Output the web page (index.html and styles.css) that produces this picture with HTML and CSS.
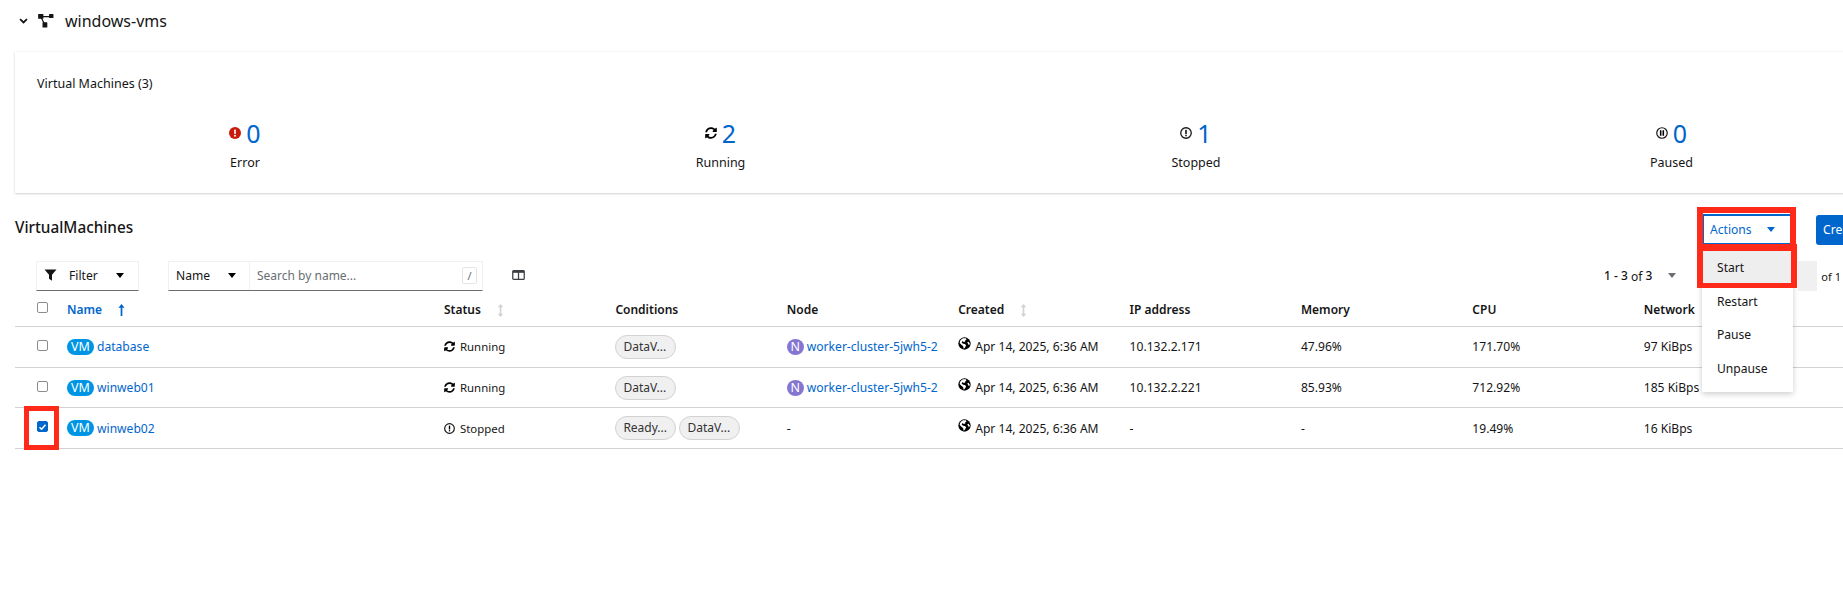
FILE: index.html
```html
<!DOCTYPE html>
<html lang="en">
<head>
  <meta charset="UTF-8">
  <title>VirtualMachines</title>
  <link rel="stylesheet" href="styles.css">
</head>
<body>
  <svg class="defs" width="0" height="0">
    <symbol id="i-sync" viewBox="0 0 512 512"><path d="M370.72 133.28C339.458 104.008 298.888 87.962 255.848 88c-77.458.068-144.328 53.178-162.791 126.85-1.344 5.363-6.122 9.15-11.651 9.15H24.103c-7.498 0-13.194-6.807-11.807-14.176C33.933 94.924 134.813 8 256 8c66.448 0 126.791 26.136 171.315 68.685L463.03 40.97C478.149 25.851 504 36.559 504 57.941V192c0 13.255-10.745 24-24 24H345.941c-21.382 0-32.09-25.851-16.971-40.971l41.75-41.749zM32 296h134.059c21.382 0 32.09 25.851 16.971 40.971l-41.75 41.75c31.262 29.273 71.835 45.319 114.876 45.28 77.418-.07 144.315-53.144 162.787-126.849 1.344-5.363 6.122-9.15 11.651-9.15h57.304c7.498 0 13.194 6.807 11.807 14.176C478.067 417.076 377.187 504 256 504c-66.448 0-126.791-26.136-171.315-68.685L48.97 471.03C33.851 486.149 8 475.441 8 454.059V320c0-13.255 10.745-24 24-24z"/></symbol>
    <symbol id="i-off" viewBox="0 0 16 16"><circle cx="8" cy="8" r="7" fill="none" stroke="currentColor" stroke-width="1.7"/><rect x="7" y="3.6" width="2" height="6" rx=".6"/><circle cx="8" cy="11.4" r="1.1"/></symbol>
    <symbol id="i-pause" viewBox="0 0 16 16"><circle cx="8" cy="8" r="7" fill="none" stroke="currentColor" stroke-width="1.6"/><rect x="5.2" y="4.4" width="2.1" height="7.2" rx=".4"/><rect x="8.7" y="4.4" width="2.1" height="7.2" rx=".4"/></symbol>
    <symbol id="i-globe" viewBox="0 0 16 16"><circle cx="8" cy="8" r="7.6"/><path fill="#fff" d="M6.2 1.6 9.8 1.5 10.4 3 8.8 4.4 9 5.6 7 6.2 5.6 5 4.4 6.8 6.2 8.4 8.4 8.6 10 10 9 12.4 7.6 14 6.8 14 6.4 11.4 4.2 9.4 2 7.4 2.6 4.6 4.6 2.6Z"/><path fill="#fff" d="M11.4 6.4 13 5.8 14.2 7.8 14 10 12.8 9.2Z"/></symbol>
    <symbol id="i-caret" viewBox="0 0 10 6"><path d="M0 0h10L5 6z"/></symbol>
    <symbol id="i-sort" viewBox="0 0 8 16"><path d="M4 0 7.4 4H5v8h2.4L4 16 .6 12H3V4H.6z"/></symbol>
  </svg>

  <div class="project">
    <svg class="chevron" viewBox="0 0 10 7" width="9" height="6"><path d="M1 1.2 5 5.2 9 1.2" fill="none" stroke="#151515" stroke-width="2"/></svg>
    <svg class="project-icon" viewBox="0 0 18 16" width="16" height="14"><path d="M3 3H14M3 3 7.5 12" stroke="#151515" stroke-width="1.3" fill="none"/><rect x="0" y="0" width="6" height="5.5" rx=".6" fill="#151515"/><rect x="12.5" y="0" width="5" height="4.5" rx=".6" fill="#151515"/><rect x="5" y="9.5" width="5.5" height="6" rx=".6" fill="#151515"/></svg>
    <span>windows-vms</span>
  </div>

  <section class="card">
    <h3 class="card-title">Virtual Machines (3)</h3>
    <div class="stats">
      <div class="stat">
        <div class="stat-top">
          <svg class="stat-icon" viewBox="0 0 16 16"><circle cx="8" cy="8" r="8" fill="#c9190b"/><rect x="6.9" y="3.2" width="2.2" height="6.2" rx=".6" fill="#fff"/><circle cx="8" cy="11.6" r="1.3" fill="#fff"/></svg>
          <a class="stat-num">0</a>
        </div>
        <div class="stat-label">Error</div>
      </div>
      <div class="stat">
        <div class="stat-top"><svg class="stat-icon"><use href="#i-sync"/></svg><a class="stat-num">2</a></div>
        <div class="stat-label">Running</div>
      </div>
      <div class="stat">
        <div class="stat-top"><svg class="stat-icon"><use href="#i-off"/></svg><a class="stat-num">1</a></div>
        <div class="stat-label">Stopped</div>
      </div>
      <div class="stat">
        <div class="stat-top"><svg class="stat-icon"><use href="#i-pause"/></svg><a class="stat-num">0</a></div>
        <div class="stat-label">Paused</div>
      </div>
    </div>
  </section>

  <div class="list-head">
    <h2>VirtualMachines</h2>
    <div class="list-actions">
      <button class="btn-actions">Actions <svg width="8" height="5"><use href="#i-caret"/></svg></button>
      <button class="btn-create">Create</button>
    </div>
  </div>

  <div class="toolbar">
    <div class="filter-box">
      <svg viewBox="0 0 16 16" width="13" height="12"><path d="M0 .5h16L10 7.6V15.5L6 13V7.6z" fill="#151515"/></svg>
      <span>Filter</span>
      <svg class="caret" width="8" height="5"><use href="#i-caret"/></svg>
    </div>
    <div class="search-box">
      <div class="search-type"><span>Name</span><svg class="caret" width="8" height="5"><use href="#i-caret"/></svg></div>
      <div class="search-input"><span>Search by name...</span><kbd>/</kbd></div>
    </div>
    <svg class="columns-icon" viewBox="0 0 14 11" width="13" height="10"><rect x=".7" y=".7" width="12.6" height="9.6" rx="1" fill="none" stroke="#3c3f42" stroke-width="1.4"/><rect x=".7" y=".7" width="12.6" height="2.4" fill="#3c3f42"/><rect x="6.3" y="1" width="1.4" height="9" fill="#3c3f42"/></svg>
    <div class="pagination">
      <b>1 - 3</b>&nbsp;of&nbsp;<b>3</b>
      <svg class="page-caret" width="8" height="5"><use href="#i-caret"/></svg>
      <div class="page-input"></div>
      <span class="page-of">of 1</span>
    </div>
  </div>

  <div class="table">
    <div class="row head">
      <div class="cell-check"><span class="check"></span></div>
      <div class="sorted">Name <svg class="sort-up" viewBox="0 0 8 14" width="7" height="12"><path d="M4 0 7.6 4.4H5V14H3V4.4H.4z" fill="#06c"/></svg></div>
      <div>Status <svg class="sort-both" width="7" height="13"><use href="#i-sort"/></svg></div>
      <div>Conditions</div>
      <div>Node</div>
      <div>Created <svg class="sort-both" width="7" height="13"><use href="#i-sort"/></svg></div>
      <div>IP address</div>
      <div>Memory</div>
      <div>CPU</div>
      <div>Network</div>
    </div>

    <div class="row">
      <div class="cell-check"><span class="check"></span></div>
      <div class="name-cell"><span class="vm-badge">VM</span><a>database</a></div>
      <div class="icon-text status"><svg class="status-icon"><use href="#i-sync"/></svg>Running</div>
      <div class="chips"><span class="chip">DataV...</span></div>
      <div class="name-cell"><span class="node-badge">N</span><a>worker-cluster-5jwh5-2</a></div>
      <div class="icon-text"><svg class="globe"><use href="#i-globe"/></svg>Apr 14, 2025, 6:36 AM</div>
      <div>10.132.2.171</div>
      <div>47.96%</div>
      <div>171.70%</div>
      <div>97 KiBps</div>
    </div>

    <div class="row">
      <div class="cell-check"><span class="check"></span></div>
      <div class="name-cell"><span class="vm-badge">VM</span><a>winweb01</a></div>
      <div class="icon-text status"><svg class="status-icon"><use href="#i-sync"/></svg>Running</div>
      <div class="chips"><span class="chip">DataV...</span></div>
      <div class="name-cell"><span class="node-badge">N</span><a>worker-cluster-5jwh5-2</a></div>
      <div class="icon-text"><svg class="globe"><use href="#i-globe"/></svg>Apr 14, 2025, 6:36 AM</div>
      <div>10.132.2.221</div>
      <div>85.93%</div>
      <div>712.92%</div>
      <div>185 KiBps</div>
    </div>

    <div class="row">
      <div class="cell-check"><span class="check checked"><svg viewBox="0 0 12 12" width="10" height="10"><path d="M2 6.4 4.8 9 10 3" fill="none" stroke="#fff" stroke-width="2"/></svg></span></div>
      <div class="name-cell"><span class="vm-badge">VM</span><a>winweb02</a></div>
      <div class="icon-text status"><svg class="status-icon"><use href="#i-off"/></svg>Stopped</div>
      <div class="chips"><span class="chip">Ready...</span><span class="chip">DataV...</span></div>
      <div>-</div>
      <div class="icon-text"><svg class="globe"><use href="#i-globe"/></svg>Apr 14, 2025, 6:36 AM</div>
      <div>-</div>
      <div>-</div>
      <div>19.49%</div>
      <div>16 KiBps</div>
    </div>
  </div>

  <ul class="menu">
    <li class="active">Start</li>
    <li>Restart</li>
    <li>Pause</li>
    <li>Unpause</li>
  </ul>

  <div class="mark mark-actions"></div>
  <div class="mark mark-start"></div>
  <div class="mark mark-check"></div>
</body>
</html>
```

FILE: styles.css
```css
html, body {
  margin: 0;
  height: 604px;
  overflow: hidden;
  background: #fff;
}
body {
  position: relative;
  width: 1900px;
  font-family: "Noto Sans", sans-serif;
  font-size: 12.1px;
  color: #151515;
  box-sizing: border-box;
  padding: 0 0 0 15px;
}
.defs {
  position: absolute;
}
a {
  color: #06c;
}

.project {
  display: flex;
  align-items: center;
  height: 42px;
  font-size: 16px;
}
.chevron {
  margin-left: 4px;
}
.project-icon {
  margin-left: 10px;
  margin-right: 11px;
}

.card {
  margin-top: 10px;
  height: 141px;
  box-sizing: border-box;
  padding-top: 24px;
  background: #fff;
  box-shadow: 0 1px 2px rgba(3,3,3,.16), 0 0 2px rgba(3,3,3,.06);
}
.card-title {
  margin: 0 0 0 22px;
  font-size: 12.5px;
  font-weight: 400;
  line-height: 15px;
}
.stats {
  display: grid;
  grid-template-columns: repeat(4, 460px);
  column-gap: 15.5px;
  margin-top: 27px;
}
.stat {
  text-align: center;
  font-size: 12.5px;
}
.stat-top {
  display: flex;
  justify-content: center;
  align-items: center;
  gap: 5px;
  height: 30px;
}
.stat-icon {
  width: 12px;
  height: 12px;
}
.stat-num {
  font-size: 25px;
  line-height: 30px;
}
.stat-label {
  margin-top: 6px;
  line-height: 17px;
}

.list-head {
  display: flex;
  justify-content: space-between;
  align-items: center;
  margin-top: 21px;
  height: 30px;
}
.list-head h2 {
  margin: 0 0 4px;
  font-size: 15.3px;
  font-weight: 500;
}
.list-actions {
  display: flex;
  gap: 25px;
  width: 197px;
}
.btn-actions {
  width: 88px;
  height: 30px;
  display: flex;
  align-items: center;
  gap: 15px;
  padding: 0 0 0 6px;
  border: 1px solid #06c;
  border-top-width: 2px;
  background: #fff;
  color: #06c;
  font: inherit;
}
.btn-actions svg {
  fill: #06c;
}
.btn-create {
  width: 84px;
  height: 30px;
  margin-top: 1px;
  border: 0;
  border-radius: 3px;
  background: #06c;
  color: #fff;
  font: inherit;
  text-align: left;
  padding-left: 7px;
}

.toolbar {
  display: flex;
  align-items: center;
  margin-top: 17px;
  height: 30px;
  padding-left: 21px;
}
.filter-box {
  display: flex;
  align-items: center;
  width: 103px;
  height: 30px;
  box-sizing: border-box;
  padding: 0 0 2px 7px;
  border: 1px solid #f0f0f0;
  border-bottom: 1px solid #6a6e73;
}
.filter-box span {
  margin-left: 12px;
}
.filter-box .caret {
  margin-left: 18px;
}
.search-box {
  display: flex;
  margin-left: 29px;
  width: 315px;
  height: 30px;
  box-sizing: border-box;
  border: 1px solid #f0f0f0;
  border-bottom: 1px solid #6a6e73;
}
.search-type {
  display: flex;
  align-items: center;
  width: 81px;
  padding: 0 0 2px 7px;
  box-sizing: border-box;
  border-right: 1px solid #f0f0f0;
}
.search-type .caret {
  margin-left: 18px;
}
.search-input {
  flex: 1;
  display: flex;
  align-items: center;
  justify-content: space-between;
  padding: 0 5px 2px 7px;
  color: #6a6e73;
  font-size: 12px;
}
kbd {
  width: 13px;
  height: 15px;
  border: 1px solid #e5e5e5;
  border-radius: 2px;
  font: 11px "Noto Sans", sans-serif;
  line-height: 15px;
  text-align: center;
}
.columns-icon {
  margin: 0 0 2px 29px;
}
.pagination {
  display: flex;
  align-items: center;
  margin-left: 1079px;
  height: 30px;
  font-size: 12px;
  white-space: nowrap;
}
.pagination b {
  font-weight: 500;
  position: relative;
  top: -1px;
}
.page-caret {
  margin-left: 16px;
  margin-bottom: 2px;
  fill: #6a6e73;
}
.page-input {
  width: 19px;
  height: 30px;
  margin-left: 122px;
  margin-right: 4px;
  background: #f0f0f0;
}
.page-of {
  font-size: 11px;
}

.row {
  display: grid;
  grid-template-columns: 52px 377px repeat(8, 171.4px);
  align-items: center;
  height: 40.7px;
  box-sizing: border-box;
  border-bottom: 1px solid #d2d2d2;
}
.head {
  height: 36px;
  padding-top: 2px;
  font-weight: 600;
  font-size: 12px;
}
.head .cell-check {
  margin-top: -5px;
}
.cell-check {
  padding-left: 22px;
  display: flex;
  margin-top: -3px;
}
.check {
  display: flex;
  align-items: center;
  justify-content: center;
  box-sizing: border-box;
  width: 11px;
  height: 11px;
  border: 1px solid #8a8d90;
  border-radius: 2px;
}
.check.checked {
  border-color: #06c;
  background: #06c;
}
.sorted {
  color: #06c;
}
.sort-up {
  margin-left: 13px;
  vertical-align: -2px;
}
.sort-both {
  margin-left: 13px;
  fill: #d2d2d2;
  vertical-align: -3px;
}
.name-cell {
  display: flex;
  align-items: center;
  gap: 3px;
}
.vm-badge, .node-badge {
  display: inline-block;
  height: 16px;
  color: #fff;
  text-align: center;
  line-height: 16px;
  font-size: 12.5px;
}
.vm-badge {
  width: 27px;
  border-radius: 8px;
  background: #0095e4;
}
.node-badge {
  width: 17px;
  border-radius: 50%;
  background: #8476d1;
}
.icon-text {
  display: flex;
  align-items: center;
}
.status {
  font-size: 11.4px;
}
.status-icon {
  width: 11px;
  height: 11px;
  margin-right: 5px;
}
.globe {
  width: 13px;
  height: 13px;
  margin-right: 4px;
  margin-top: -6px;
}
.chips {
  display: flex;
  gap: 3px;
}
.chip {
  box-sizing: border-box;
  width: 61px;
  height: 24px;
  line-height: 22px;
  padding-left: 7px;
  border: 1px solid #d2d2d2;
  border-radius: 12px;
  background: #f0f0f0;
  color: #333;
  font-size: 12px;
}

.menu {
  position: absolute;
  left: 1702px;
  top: 250px;
  width: 91px;
  margin: 0;
  padding: 0 0 7px;
  list-style: none;
  background: #fff;
  box-shadow: 0 2px 6px rgba(3,3,3,.2);
}
.menu li {
  height: 33.4px;
  line-height: 33.4px;
  padding-left: 15px;
}
.menu li.active {
  background: #eee;
  height: 35px;
  line-height: 36px;
}
.mark {
  position: absolute;
  box-sizing: border-box;
  border: 6px solid #ff2a1a;
}
.mark-actions {
  left: 1697px;
  top: 207px;
  width: 99px;
  height: 44px;
}
.mark-start {
  left: 1697px;
  top: 244px;
  width: 100px;
  height: 44px;
  border-top-width: 7px;
  border-bottom-width: 5px;
}
.mark-check {
  left: 24px;
  top: 406px;
  width: 35px;
  height: 44px;
  border-width: 5px;
}
```
